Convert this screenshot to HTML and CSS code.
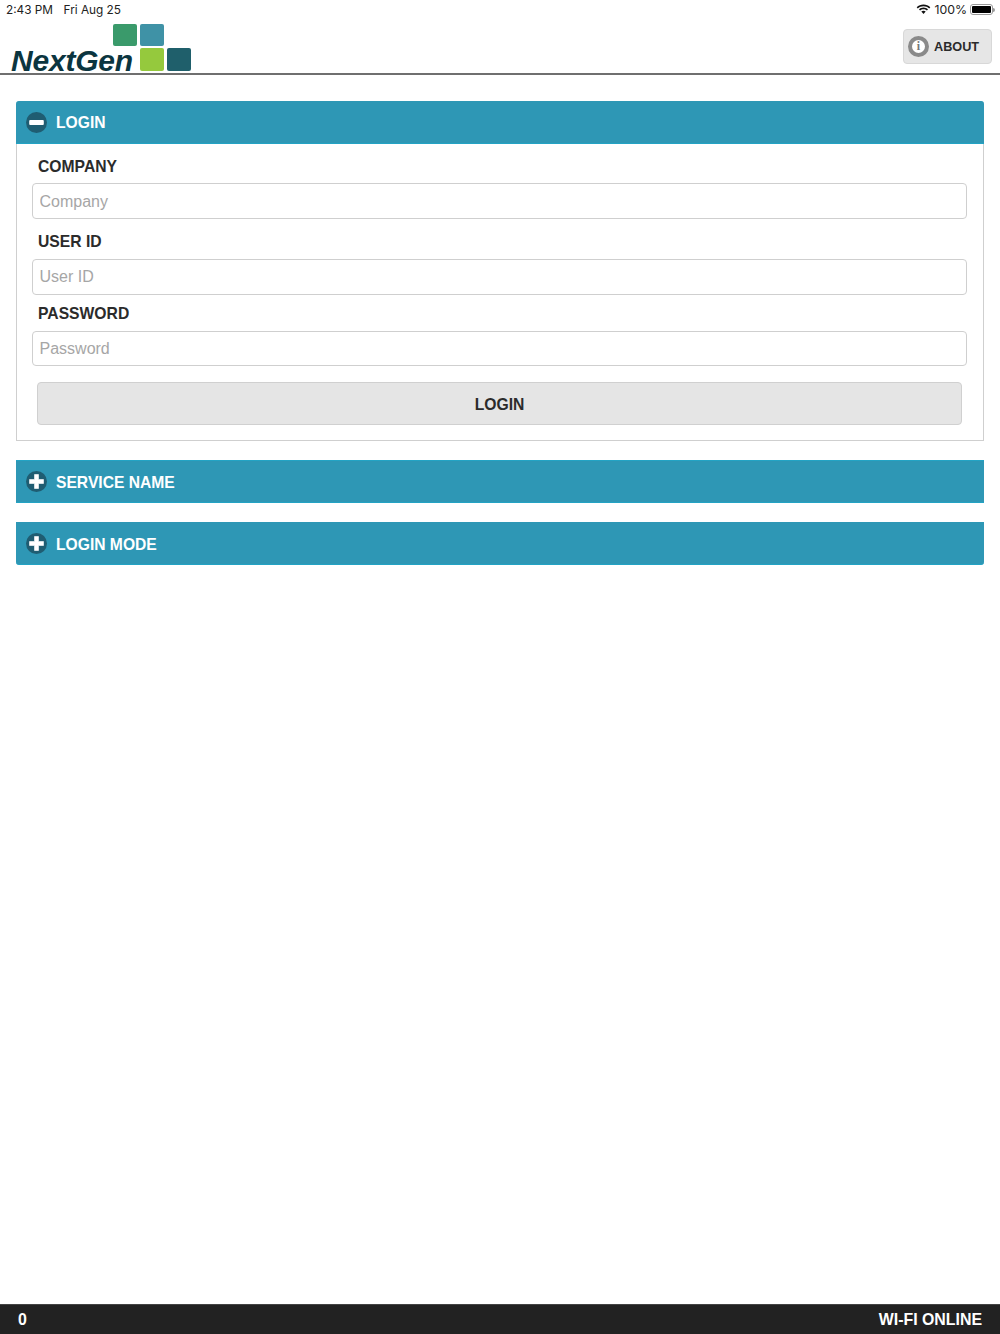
FILE: index.html
```html
<!DOCTYPE html>
<html lang="en">
<head>
    <meta charset="utf-8" />
    <title>NextGen Login</title>
    <link rel="stylesheet" href="styles.css">
</head>
<body>
    <div class="statusBar">
        <div class="statusTime"><span>2:43 PM</span><span>Fri Aug 25</span></div>
        <div class="statusRight">
            <svg class="wifiIcon" width="15" height="11" viewBox="0 0 15 11">
                <path d="M7.5 2.2c2.2 0 4.2.8 5.7 2.2l1.1-1.2C12.5 1.500 10.100.5 7.500.5S2.500 1.500.7 3.200l1.100 1.200C3.300 3 5.300 2.200 7.500 2.200z" fill="#111"/>
                <path d="M7.500 5.300c1.300 0 2.500.5 3.400 1.300l1.100-1.200C10.800 4.300 9.200 3.600 7.500 3.600S4.200 4.300 3 5.400l1.100 1.200c.9-.8 2.100-1.300 3.400-1.300z" fill="#111"/>
                <path d="M7.500 6.800c-.9 0-1.600.3-2.200.8l2.200 2.500 2.200-2.500c-.6-.5-1.300-.8-2.200-.8z" fill="#111"/>
            </svg>
            <span>100%</span>
            <span class="battery"><span class="batteryFill"></span></span>
            <span class="batteryNub"></span>
        </div>
    </div>
    <div class="header">
        <div class="logo">
            <span class="logoText">NextGen</span>
            <div class="logoBlocks">
                <i class="blockGreen"></i>
                <i class="blockTeal"></i>
                <i class="blockLime"></i>
                <i class="blockDark"></i>
            </div>
        </div>
        <button type="button" class="aboutBtn">
            <span class="infoIcon">i</span>
            ABOUT
        </button>
    </div>

    <div class="content">
        <div class="panel">
            <div class="panelHead">
                <svg class="roundIcon" width="21" height="21" viewBox="0 0 21 21">
                    <circle cx="10.500" cy="10.500" r="10.500" fill="#1f5d72"/>
                    <rect x="3.200" y="8" width="14.600" height="5" rx="1" fill="#fff"/>
                </svg>
                <span class="panelTitle">LOGIN</span>
            </div>
            <div class="panelBody">
                <label class="fieldLabel">COMPANY</label>
                <input class="fieldInput" type="text" placeholder="Company" />
                <label class="fieldLabel">USER ID</label>
                <input class="fieldInput" type="text" placeholder="User ID" />
                <label class="fieldLabel">PASSWORD</label>
                <input class="fieldInput" type="password" placeholder="Password" />
                <button type="button" class="loginBtn">LOGIN</button>
            </div>
        </div>

        <div class="panel">
            <div class="panelHead">
                <svg class="roundIcon" width="21" height="21" viewBox="0 0 21 21">
                    <circle cx="10.500" cy="10.500" r="10.500" fill="#1f5d72"/>
                    <path d="M8.500 3.500h4V8.500h5v4h-5v5h-4v-5h-5v-4h5z" fill="#fff" stroke="#fff" stroke-width=".6" stroke-linejoin="round"/>
                </svg>
                <span class="panelTitle">SERVICE NAME</span>
            </div>
        </div>

        <div class="panel">
            <div class="panelHead">
                <svg class="roundIcon" width="21" height="21" viewBox="0 0 21 21">
                    <circle cx="10.500" cy="10.500" r="10.500" fill="#1f5d72"/>
                    <path d="M8.500 3.500h4V8.500h5v4h-5v5h-4v-5h-5v-4h5z" fill="#fff" stroke="#fff" stroke-width=".6" stroke-linejoin="round"/>
                </svg>
                <span class="panelTitle">LOGIN MODE</span>
            </div>
        </div>
    </div>

    <div class="footer">
        <span>0</span>
        <span>WI-FI ONLINE</span>
    </div>
</body>
</html>
```

FILE: styles.css
```css
html{font-size:14px;}
body{margin:0;height:1334px;display:flex;flex-direction:column;background:#fff;color:#2b2b2b;font-family:"Liberation Sans",Arial,sans-serif;}

/*status bar*/
.statusBar{height:20px;display:flex;justify-content:space-between;align-items:center;padding:0 5px 1px 6px;box-sizing:border-box;font-family:"Inter","Liberation Sans",sans-serif;font-size:11.800px;color:#222;}
.statusTime{display:flex;gap:10.500px;}
.statusRight{display:flex;align-items:center;gap:3px;font-size:12.300px;}
.battery{width:23px;height:11px;box-sizing:border-box;border:1px solid #999;border-radius:3px;padding:1px;display:flex;}
.batteryFill{flex:1;background:#000;border-radius:1px;}
.batteryNub{width:2px;height:4px;margin-left:-3px;background:#999;border-radius:0 2px 2px 0;}

/*header*/
.header{height:55px;box-sizing:border-box;border-bottom:2px solid #6f6f6f;display:flex;justify-content:space-between;padding:4px 8px 0 11px;}
.logo{display:flex;align-items:flex-end;height:47px;}
.logoText{font-size:30px;line-height:30px;font-weight:bold;font-style:italic;color:#0b3540;margin-bottom:-5px;width:102px;letter-spacing:-.2px;}
.logoBlocks{display:grid;grid-template-columns:repeat(3,24px);grid-template-rows:22px 23px;gap:2px 3px;}
.logoBlocks i{border-radius:2px;}
.blockGreen{grid-column:1;grid-row:1;background:#3a9a6b;}
.blockTeal{grid-column:2;grid-row:1;background:#3f92a6;}
.blockLime{grid-column:2;grid-row:2;background:#95c93d;}
.blockDark{grid-column:3;grid-row:2;background:#1f5f6b;}
.aboutBtn{width:89px;height:35px;margin-top:5px;padding:0 0 0 4px;display:flex;align-items:center;gap:5px;background:#e6e6e6;border:1px solid #d8d8d8;border-radius:4px;font-family:inherit;font-size:12.700px;font-weight:bold;color:#2b2b2b;}
.infoIcon{width:21px;height:21px;box-sizing:border-box;border:4px solid #8a8a8a;border-radius:50%;background:#fff;color:#777;font-family:"Liberation Serif",serif;font-size:12px;line-height:13px;text-align:center;}

/*panels*/
.content{flex:1;padding:26px 16px 0;display:flex;flex-direction:column;gap:19px;}
.panelHead{height:43px;box-sizing:border-box;padding-left:10px;display:flex;align-items:center;gap:9px;background:#2e97b5;border-top:1px solid #2e97b5;border-bottom:1px solid #23a3c4;color:#fff;font-size:15.650px;font-weight:bold;}
.panelTitle{padding-top:2px;}
.panel:nth-child(1) .panelHead{border-radius:3px 3px 0 0;}
.panel:nth-child(1) .panelTitle{padding-top:0;}
.panel:nth-child(2) .panelHead{border-top-color:#23a3c4;}
.panel:nth-child(3) .panelHead{border-radius:0 0 3px 3px;}
.panelBody{height:297px;box-sizing:border-box;border:1px solid #cfcfcf;border-top:0;padding:13px 16px 0 15px;display:flex;flex-direction:column;}
.fieldLabel{height:20px;line-height:20px;margin:0 0 7px 6px;font-size:15.700px;font-weight:bold;color:#2b2b2b;}
.fieldLabel:first-child{margin-bottom:6px;}
.fieldInput{height:36px;box-sizing:border-box;padding:2px 6.500px 0;margin-bottom:13px;border:1px solid #cfcfcf;border-radius:4px;background:#fff;font-family:inherit;font-size:16px;}
.fieldInput:nth-of-type(2){margin-bottom:9px;padding-top:0;}
.fieldInput:nth-of-type(3){height:35px;margin-bottom:16px;padding-top:0;}
.fieldInput::placeholder{color:#a6a6a6;opacity:1;}
.loginBtn{height:43px;margin:0 5px;padding-top:3px;background:#e5e5e5;border:1px solid #d0d0d0;border-radius:4px;font-family:inherit;font-size:15.700px;font-weight:bold;color:#2b2b2b;}

/*footer*/
.footer{height:30px;display:flex;justify-content:space-between;align-items:center;padding:0 18px;background:#222;border-top:1px solid #444;box-sizing:border-box;color:#fff;font-size:15.900px;font-weight:bold;}
```
